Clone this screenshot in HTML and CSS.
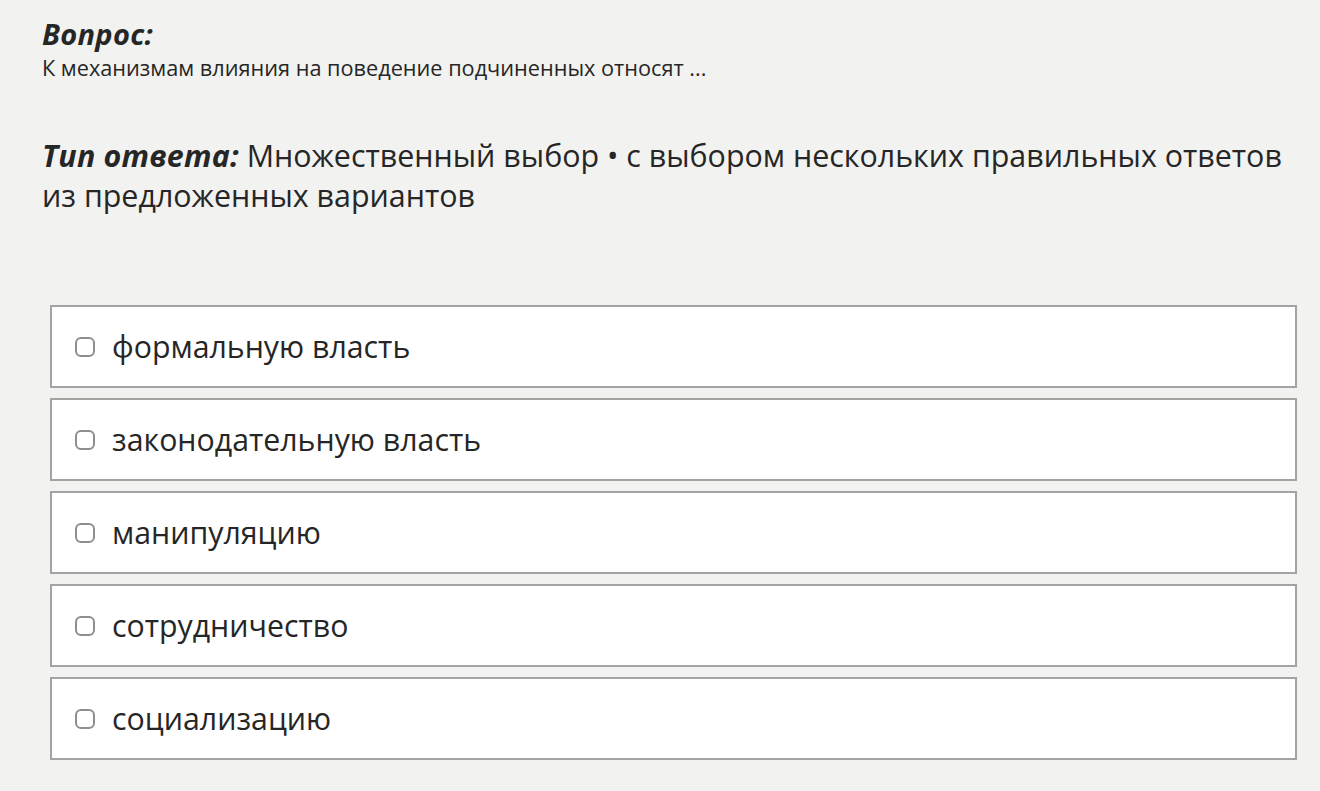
FILE: index.html
```html
<!DOCTYPE html>
<html lang="ru">
<head>
<meta charset="utf-8">
<link rel="stylesheet" href="styles.css">
</head>
<body>
<main class="page">
  <section class="question">
    <h1 class="label">Вопрос:</h1>
    <p class="question-text">К механизмам влияния на поведение подчиненных относят ...</p>
  </section>
  <p class="answer-type"><em class="type-label">Тип ответа:</em> Множественный выбор • с выбором нескольких правильных ответов из предложенных вариантов</p>
  <ul class="options">
    <li class="option"><span class="box"></span><span class="option-text">формальную власть</span></li>
    <li class="option"><span class="box"></span><span class="option-text">законодательную власть</span></li>
    <li class="option"><span class="box"></span><span class="option-text">манипуляцию</span></li>
    <li class="option"><span class="box"></span><span class="option-text">сотрудничество</span></li>
    <li class="option"><span class="box"></span><span class="option-text">социализацию</span></li>
  </ul>
</main>
</body>
</html>
```
FILE: styles.css
```css
html, body {
  margin: 0;
  padding: 0;
  background: #f2f2f1;
}
body {
  font-family: "Open Sans", "Noto Sans", sans-serif;
  color: #262626;
}
.page {
  padding: 16px 23px 0 42px;
}
.label {
  margin: 0;
  font-size: 29px;
  font-weight: 700;
  font-style: italic;
  line-height: 36px;
  letter-spacing: 0.3px;
}
.question-text {
  margin: 1px 0 0;
  font-size: 21.7px;
  line-height: 30px;
}
.answer-type {
  margin: 53px 0 0;
  font-size: 30.4px;
  line-height: 40px;
}
.type-label {
  font-weight: 700;
  font-style: italic;
  letter-spacing: 0.2px;
}
.options {
  list-style: none;
  margin: 89px 0 0 8px;
  padding: 0;
  display: flex;
  flex-direction: column;
  gap: 10px;
}
.option {
  height: 79px;
  background: #fff;
  border: 2px solid #a3a3a3;
  display: flex;
  align-items: center;
  padding-left: 23px;
  gap: 17px;
}
.box {
  box-sizing: border-box;
  width: 20px;
  height: 20px;
  border: 2px solid #8e8e8e;
  border-radius: 6px;
  flex: none;
}
.option-text {
  font-size: 30.3px;
  line-height: 40px;
}
```
